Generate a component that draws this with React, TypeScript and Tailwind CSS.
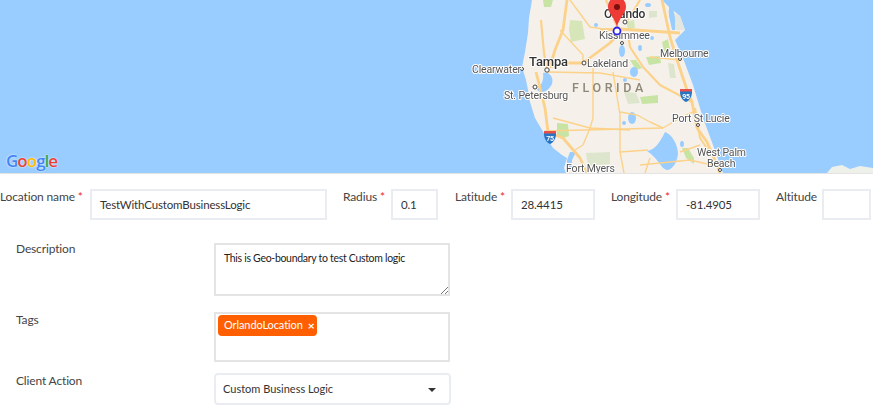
const font = { fontFamily: 'Lato, "Noto Sans", sans-serif' };
const mapFont = { fontFamily: 'Roboto, sans-serif' };

function FloridaMap() {
  const labelCls = "fill-[#555] text-[10.5px]";
  return (
    <svg viewBox="0 0 873 173" className="absolute inset-0 h-full w-full blur-[0.35px]" style={mapFont}>
      {/* land */}
      <path
        d="M532 0 L529 18 L528 33 L525 52 L522 67 L526 80 L528 90 L530 102 L535 118 L545 135 L553 148 L562 155 L567 158 L564 168 L566 173 L723 173 L713 145 L703 118 L693 85 L683 58 L675 40 L685 30 L680 16 L670 8 L662 0 Z"
        fill="#f5f1ea"
      />
      <path d="M827 173 L832 167 L842 165 L850 169 L860 166 L873 168 L873 173 Z" fill="#eef0ea" />
      <path d="M667 10 L680 16 L685 30 L676 30 Z" fill="#e4e6e0" />
      {/* parks */}
      <g fill="#c8e4a4">
        <path d="M543 0h10l-2 7h-7z" />
        <path d="M570 20l12 1 3 18-14 3-2-12z" fill="#d6e6b8" />
        <path d="M646 57l14-1 1 7-12 2z" />
        <path d="M662 42l6-3 2 10-6 2z" />
        <path d="M640 97l18-2 0 8-16 1z" />
        <path d="M557 123l11 1 1 12-8 3-4-5z" />
        <path d="M682 148l6 0 6 10 0 6-8-6z" />
        <path d="M586 153l24-1 0 12-22 2z" fill="#dde6cc" />
        <path d="M626 22l8-2 1 8-7 1z" fill="#d6e6b8" />
        <path d="M668 63l6 1 2 14-6 0z" fill="#dde6cc" />
        <path d="M624 92l12 1 4 10-12 1z" fill="#dde6cc" />
        <path d="M649 11l8 0 0 6-8 1z" fill="#dde6cc" />
        <path d="M630 60l6 0 6 8-6 2z" />
      </g>
      {/* water */}
      <g fill="#99ccff">
        <path d="M665 132 C672 134 678 145 678 154 C677 163 672 170 667 170 C660 168 660 160 647 151 C655 150 660 142 665 132Z" />
        <path d="M543 73 C550 71 554 78 552 84 C548 92 542 94 537 90 C542 84 544 80 543 73Z" />
        <ellipse cx="622" cy="51" rx="3" ry="6" />
        <ellipse cx="634" cy="72" rx="4" ry="5" />
        <ellipse cx="632" cy="118" rx="4" ry="6" />
        <ellipse cx="682" cy="144" rx="2" ry="3" />
        <ellipse cx="624" cy="123" rx="2" ry="2" />
        <ellipse cx="648" cy="5" rx="3" ry="2" />
        <ellipse cx="640" cy="48" rx="2" ry="3" />
        <ellipse cx="596" cy="25" rx="2" ry="2" />
        <ellipse cx="652" cy="38" rx="2" ry="2" />
        <ellipse cx="625" cy="80" rx="2" ry="2" />
        <path d="M570 152l6 0-4 8 0 10-5 0 0-10z" />
        <path d="M669 2l4 6 2 10 0 12-3 0-3-14z" />
      </g>
      {/* roads */}
      <g fill="none" stroke="#fcd28a" strokeWidth="1.4" strokeLinejoin="round">
        {/* I-75 */}
        <path d="M567 0 L563 30 L555 50 L550 67" strokeWidth="2.8" />
        {/* I-4 */}
        <path d="M550 67 L565 63 L583 63 L610 43 L620 32" strokeWidth="2.8" />
        <path d="M541 20 L544 53 L547 70" strokeWidth="2.2" />
        <path d="M536 72 L545 108 L548 132 L563 138 L580 158 L587 173" strokeWidth="2.8" />
        {/* I-95 */}
        <path d="M662 0 L670 37 L678 63 L687 90 L692 102 L697 128 L707 142 L717 165 L720 173" strokeWidth="2.8" />
        <path d="M695 108 L700 138 L708 150" strokeWidth="2" />
        {/* beachline */}
        <path d="M600 30 L620 29 L680 33" strokeWidth="2.8" />
        <path d="M606 0 L615 22 L620 32" strokeWidth="2.2" />
        <path d="M640 0 L628 20" strokeWidth="2.2" />
        {/* turnpike */}
        <path d="M628 34 L630 47 L643 67 L660 85 L692 102" strokeWidth="2.2" />
        <path d="M650 57 L680 60" />
        <path d="M553 118 L590 128 L630 130" />
        <path d="M593 68 L593 118 L590 128 L583 145 L575 150" />
        <path d="M613 72 L620 115 L620 152 L624 173" />
        <path d="M545 131 L663 128 L680 118 L693 112" />
        <path d="M620 112 L637 115 L650 122 L663 128" />
        <path d="M560 30 L583 55 L583 63" />
        <path d="M570 0 L590 27 L610 30" />
        <path d="M548 72 L600 73 L640 80" />
        <path d="M640 165 L690 160 L716 166" />
        <path d="M650 158 L645 173" />
        <path d="M680 152 L700 145" />
        <path d="M620 152 L648 150" />
      </g>
      {/* city dots */}
      <g fill="#fff" stroke="#444" strokeWidth="1">
        <circle cx="625" cy="22" r="2" />
        <circle cx="622" cy="43" r="1.500" />
        <circle cx="680" cy="59" r="1.500" />
        <circle cx="584" cy="63" r="2" />
        <circle cx="547" cy="70" r="2.200" />
        <circle cx="522" cy="69" r="1.500" />
        <circle cx="535" cy="87" r="2" />
        <circle cx="698" cy="125" r="1.500" />
        <circle cx="720" cy="170" r="1.500" />
      </g>
      {/* labels */}
      <g stroke="#fff" strokeWidth="2" paintOrder="stroke" strokeLinejoin="round">
        <text x="604" y="18" className="fill-[#333] text-[12px] font-medium">Orlando</text>
        <text x="599" y="39" className={labelCls}>Kissimmee</text>
        <text x="660" y="57" className={labelCls}>Melbourne</text>
        <text x="529" y="66" className="fill-[#333] text-[13px] font-medium">Tampa</text>
        <text x="587" y="67" className={labelCls}>Lakeland</text>
        <text x="472" y="73" className={labelCls}>Clearwater</text>
        <text x="504" y="99" className={labelCls}>St. Petersburg</text>
        <text x="672" y="122" className={labelCls}>Port St Lucie</text>
        <text x="697" y="156" className={labelCls}>West Palm</text>
        <text x="707" y="167" className={labelCls}>Beach</text>
        <text x="566" y="172" className={labelCls}>Fort Myers</text>
      </g>
      <text x="572" y="92" letterSpacing="3.6" className="fill-[#8f8778] text-[12.5px] font-medium">FLORIDA</text>
      {/* highway shields */}
      <g>
        <path d="M680 89h12v3c0 5-3 9-6 10c-3-1-6-5-6-10z" fill="#2a74c4" />
        <path d="M680 89h12v2.500h-12z" fill="#e8504a" />
        <text x="686" y="99" textAnchor="middle" className="fill-white text-[7px] font-bold">95</text>
        <path d="M544 131h12v3c0 5-3 9-6 10c-3-1-6-5-6-10z" fill="#2a74c4" />
        <path d="M544 131h12v2.500h-12z" fill="#e8504a" />
        <text x="550" y="141" textAnchor="middle" className="fill-white text-[7px] font-bold">75</text>
      </g>
      {/* marker */}
      <path
        d="M617 27 C615 18 608 13 608 7 C608 1 612 -3 617 -3 C622 -3 626 1 626 7 C626 13 619 18 617 27Z"
        fill="#ee3b36"
      />
      <circle cx="617" cy="7" r="3" fill="#7a0f0c" />
      <circle cx="617" cy="31" r="3.500" fill="#fff" stroke="#2a20f0" strokeWidth="1.800" />
    </svg>
  );
}

function GoogleLogo() {
  return (
    <span
      className="absolute left-[6px] top-[151px] text-[17px] leading-[20px] font-semibold tracking-[-1px] [text-shadow:0_0_2px_#fff]"
      style={{ fontFamily: '"Open Sans", sans-serif' }}
    >
      <span className="text-[#4285f4]">G</span>
      <span className="text-[#ea4335]">o</span>
      <span className="text-[#fbbc05]">o</span>
      <span className="text-[#4285f4]">g</span>
      <span className="text-[#34a853]">l</span>
      <span className="text-[#ea4335]">e</span>
    </span>
  );
}

function Req() {
  return <span className="text-[#f01f1f]"> *</span>;
}

const boxCls = "h-[31px] shrink-0 border-2 border-[#e9edf2] bg-white pl-[8px] flex items-center text-[11.5px] tracking-[-0.15px] text-[#333]";
const labelCls = "mt-[1px] shrink-0 whitespace-nowrap leading-[14px]";

export default function App() {
  return (
    <div className="h-[407px] w-[873px] overflow-hidden bg-white text-[12px] tracking-[-0.15px] text-[#444]" style={font}>
      <div className="relative h-[174px] border-b border-[#e3e3e3] bg-[#99ccff]">
        <FloridaMap />
        <GoogleLogo />
      </div>

      <div className="mt-[15px] flex items-start">
        <label className={labelCls + " w-[90px]"}>Location name<Req /></label>
        <div className={boxCls + " w-[237px]"}>TestWithCustomBusinessLogic</div>
        <label className={labelCls + " ml-[16px] w-[48px]"}>Radius<Req /></label>
        <div className={boxCls + " w-[47px]"}>0.1</div>
        <label className={labelCls + " ml-[17px] w-[56px]"}>Latitude<Req /></label>
        <div className={boxCls + " w-[84px]"}>28.4415</div>
        <label className={labelCls + " ml-[16px] w-[65px]"}>Longitude<Req /></label>
        <div className={boxCls + " w-[84px]"}>-81.4905</div>
        <label className={labelCls + " ml-[16px] w-[46px]"}>Altitude</label>
        <div className={boxCls + " w-[49px]"}></div>
      </div>

      <div className="mt-[23px] grid grid-cols-[214px_236px]">
        <label className="pl-[16px] leading-[12px]">Description</label>
        <div className="relative h-[53px] border-2 border-[#e4e4e4] pl-[8px] pt-[5px] text-[10.5px] leading-[16px] tracking-[-0.3px] text-[#222]">
          This is Geo-boundary to test Custom logic
          <svg viewBox="0 0 8 8" className="absolute bottom-0 right-0 h-2 w-2">
            <path d="M1 8L8 1M5 8L8 5" stroke="#777" strokeWidth="1" fill="none" />
          </svg>
        </div>

        <label className="mt-[17px] pl-[16px] leading-[14px]">Tags</label>
        <div className="mt-[16px] h-[50px] border-2 border-[#e4e4e4] pl-[2px] pt-[1px]">
          <span className="inline-flex h-[21px] w-[99px] items-center rounded-[4px] bg-[#ff5f00] pl-[6px] text-[11px] tracking-[-0.1px] text-white">
            OrlandoLocation
            <span className="ml-[5px] text-[12px] font-bold leading-none">×</span>
          </span>
        </div>

        <label className="mt-[12px] pl-[16px] leading-[14px]">Client Action</label>
        <div className="mt-[11px] flex h-[32px] w-[237px] items-center justify-between rounded-[4px] border-2 border-[#e9edf2] pl-[7px] pr-[13px] text-[11px] tracking-normal text-[#333]">
          Custom Business Logic
          <span className="mt-[2px] h-0 w-0 border-x-[4px] border-t-[4px] border-x-transparent border-t-[#333]" />
        </div>
      </div>
    </div>
  );
}
